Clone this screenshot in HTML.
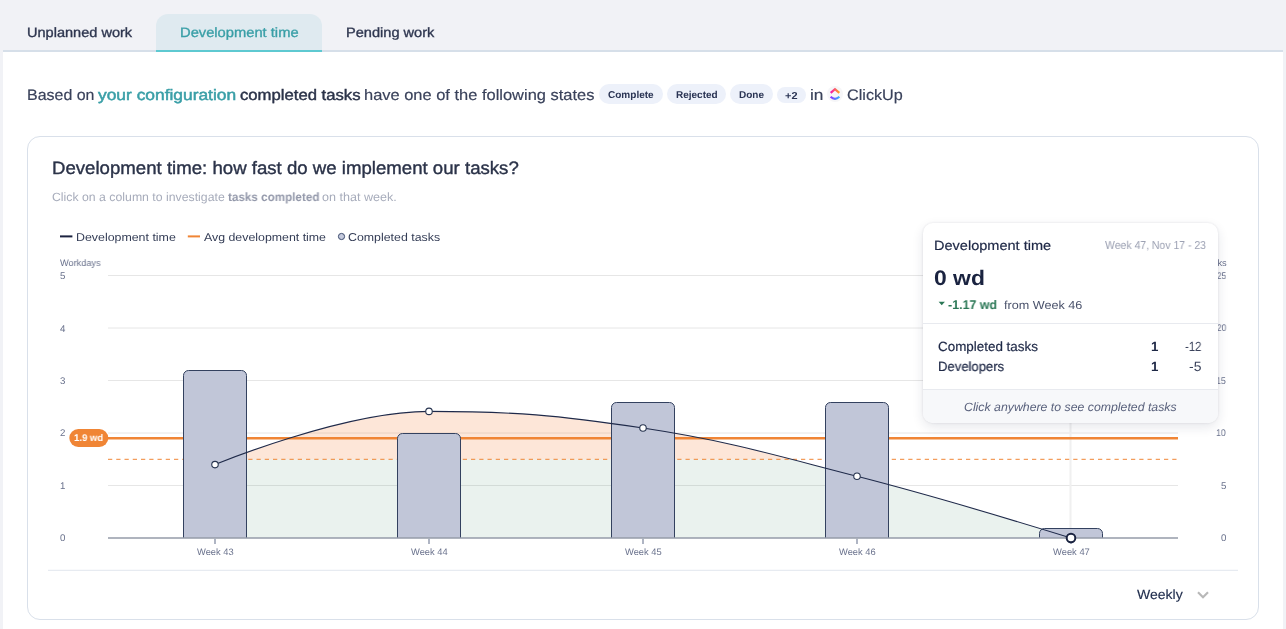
<!DOCTYPE html>
<html><head><meta charset="utf-8"><title>Development time</title>
<style>
*{box-sizing:border-box;margin:0;padding:0}
html,body{width:1286px;height:629px;overflow:hidden}
body{background:#f1f2f6;font-family:"Liberation Sans",sans-serif;position:relative}
.t{position:absolute;white-space:nowrap;line-height:1;text-rendering:geometricPrecision;transform-origin:0 0;will-change:transform}
#content{position:absolute;left:3px;top:52px;width:1280px;height:577px;background:#fff}
#tabline{position:absolute;left:3px;top:50px;width:1280px;height:2px;background:#d6dfe9}
#tabactive{position:absolute;left:156px;top:14px;width:166px;height:38px;background:#dfeaf0;border-radius:12px 12px 0 0;border-bottom:2px solid #5ec9d1}
#card{position:absolute;left:27px;top:136px;width:1232px;height:484px;border:1px solid #d9e0ea;border-radius:13px;background:#fff}
.chip{position:absolute;top:84px;height:20px;border-radius:10px;background:#edf1fa}
#chart{position:absolute;left:0;top:0}
#tip{position:absolute;left:923px;top:223px;width:295px;height:200px;background:#fff;border-radius:10px;box-shadow:0 4px 12px rgba(30,40,70,0.11),0 0 3px rgba(30,40,70,0.10);overflow:hidden}
#tip .sep{position:absolute;left:0;width:100%;height:1px;background:#e8eaef}
#tip .foot{position:absolute;left:0;top:166px;width:100%;height:34px;background:#f7f8fa}
#icon{position:absolute;left:827px;top:86px;width:16px;height:16px}
</style></head><body>
<div id="tabline"></div>
<div id="tabactive"></div>
<div id="content"></div>
<div class="chip" style="left:599px;width:64px"></div>
<div class="chip" style="left:667px;width:59px"></div>
<div class="chip" style="left:730px;width:43px"></div>
<div class="chip" style="left:777.3px;width:28.5px;top:87px;height:16px"></div>
<svg id="icon" viewBox="0 0 16 16"><defs><linearGradient id="g1" x1="0" x2="1" y1="0" y2="0"><stop offset="0" stop-color="#f513b4"/><stop offset="1" stop-color="#ffa61c"/></linearGradient><linearGradient id="g2" x1="0" x2="1" y1="0" y2="0"><stop offset="0" stop-color="#8b30ff"/><stop offset="1" stop-color="#33b4ff"/></linearGradient></defs><circle cx="8" cy="8" r="8" fill="#f6f6f8"/><path d="M3.7 6.9L8 3.1L12.3 6.9" fill="none" stroke="url(#g1)" stroke-width="2.2"/><path d="M3.6 10.7Q8 14.9 12.4 10.7" fill="none" stroke="url(#g2)" stroke-width="2.1"/></svg>
<div id="card"></div>
<svg id="chart" width="1286" height="629" viewBox="0 0 1286 629">
<defs><clipPath id="up"><rect x="100" y="260" width="1100" height="199.25"/></clipPath><clipPath id="dn"><rect x="100" y="459.25" width="1100" height="90"/></clipPath></defs>
<path d="M108 275.5H1178" stroke="#e6e6e6" stroke-width="1"/>
<path d="M108 328.0H1178" stroke="#e6e6e6" stroke-width="1"/>
<path d="M108 380.5H1178" stroke="#e6e6e6" stroke-width="1"/>
<path d="M108 433.0H1178" stroke="#e6e6e6" stroke-width="1"/>
<path d="M108 485.5H1178" stroke="#e6e6e6" stroke-width="1"/>
<path d="M1070.5 275V538" stroke="#f0f0f0" stroke-width="2"/>
<path d="M215.00 464.61 C215.00 464.61 343.40 411.42 429.00 411.42 C514.60 411.42 557.40 415.03 643.00 428.01 C728.60 440.99 771.40 454.31 857.00 476.31 C942.60 498.31 1071.00 538.00 1071.00 538.00 L1071 538 L215 538 Z" fill="rgba(244,132,60,0.2)" clip-path="url(#up)"/>
<path d="M215.00 464.61 C215.00 464.61 343.40 411.42 429.00 411.42 C514.60 411.42 557.40 415.03 643.00 428.01 C728.60 440.99 771.40 454.31 857.00 476.31 C942.60 498.31 1071.00 538.00 1071.00 538.00 L1071 538 L215 538 Z" fill="rgba(46,125,91,0.1)" clip-path="url(#dn)"/>
<path d="M108 438.2H1178" stroke="#f08535" stroke-width="2.4"/>
<path d="M108 459.3H1178" stroke="#f08535" stroke-width="1" stroke-dasharray="4.25 4"/>
<path d="M183.5 538V375.5a5.0 5.0 0 0 1 5.0 -5.0H241.5a5.0 5.0 0 0 1 5.0 5.0V538" fill="#c1c6d8" stroke="#33415f" stroke-width="1"/>
<path d="M397.5 538V438.5a5.0 5.0 0 0 1 5.0 -5.0H455.5a5.0 5.0 0 0 1 5.0 5.0V538" fill="#c1c6d8" stroke="#33415f" stroke-width="1"/>
<path d="M611.5 538V407.5a5.0 5.0 0 0 1 5.0 -5.0H669.5a5.0 5.0 0 0 1 5.0 5.0V538" fill="#c1c6d8" stroke="#33415f" stroke-width="1"/>
<path d="M825.5 538V407.5a5.0 5.0 0 0 1 5.0 -5.0H883.5a5.0 5.0 0 0 1 5.0 5.0V538" fill="#c1c6d8" stroke="#33415f" stroke-width="1"/>
<path d="M1039.5 538V533.5a5.0 5.0 0 0 1 5.0 -5.0H1097.5a5.0 5.0 0 0 1 5.0 5.0V538" fill="#c1c6d8" stroke="#33415f" stroke-width="1"/>
<path d="M108 538H1178" stroke="#949ba9" stroke-width="1.6"/>
<path d="M215 538.7V544" stroke="#9ba3b5" stroke-width="1.6"/>
<path d="M429 538.7V544" stroke="#9ba3b5" stroke-width="1.6"/>
<path d="M643 538.7V544" stroke="#9ba3b5" stroke-width="1.6"/>
<path d="M857 538.7V544" stroke="#9ba3b5" stroke-width="1.6"/>
<path d="M1071 538.7V544" stroke="#9ba3b5" stroke-width="1.6"/>
<path d="M215.00 464.61 C215.00 464.61 343.40 411.42 429.00 411.42 C514.60 411.42 557.40 415.03 643.00 428.01 C728.60 440.99 771.40 454.31 857.00 476.31 C942.60 498.31 1071.00 538.00 1071.00 538.00" fill="none" stroke="#1f2a4a" stroke-width="1.1"/>
<circle cx="215.0" cy="464.6" r="3.25" fill="#fff" stroke="#26334f" stroke-width="1.1"/>
<circle cx="429.0" cy="411.4" r="3.25" fill="#fff" stroke="#26334f" stroke-width="1.1"/>
<circle cx="643.0" cy="428.0" r="3.25" fill="#fff" stroke="#26334f" stroke-width="1.1"/>
<circle cx="857.0" cy="476.3" r="3.25" fill="#fff" stroke="#26334f" stroke-width="1.1"/>
<circle cx="1071" cy="538" r="4.3" fill="#fff" stroke="#1a2340" stroke-width="2"/>
<path d="M60 236.4H72.4" stroke="#1c2340" stroke-width="2"/>
<path d="M187.8 236.4H200" stroke="#f08535" stroke-width="2"/>
<circle cx="341.5" cy="236.5" r="3.1" fill="#c5cadd" stroke="#3a4a6d" stroke-width="1"/>
<rect x="69.3" y="429" width="39" height="18" rx="9" fill="#f08535"/>
<path d="M48 570.3H1238" stroke="#e1e6ee" stroke-width="1"/>
<path d="M1198 592.3L1203 597.2L1208 592.3" fill="none" stroke="#b8b8b8" stroke-width="2.2"/>
</svg>
<div class="t" id="tab1" style="left:26.60px;top:26px;font-size:13.6px;color:#2f3750;-webkit-text-stroke:0.35px #2f3750;transform:scaleX(1.0700)">Unplanned work</div>
<div class="t" id="tab2" style="left:179.53px;top:26px;font-size:13.6px;color:#3a9fa7;-webkit-text-stroke:0.35px #3a9fa7;transform:scaleX(1.0824)">Development time</div>
<div class="t" id="tab3" style="left:345.53px;top:26px;font-size:13.6px;color:#2f3750;-webkit-text-stroke:0.35px #2f3750;transform:scaleX(1.0730)">Pending work</div>
<div class="t" id="s1" style="left:27.00px;top:88px;font-size:15.2px;color:#3a425b;-webkit-text-stroke:0.18px #3a425b;transform:scaleX(1.0513)">Based on</div>
<div class="t" id="s2" style="left:98.46px;top:88px;font-size:15.2px;color:#3a9fa7;-webkit-text-stroke:0.5px #3a9fa7;transform:scaleX(1.1441)">your configuration</div>
<div class="t" id="s3" style="left:240.04px;top:88px;font-size:15.2px;color:#2b3349;-webkit-text-stroke:0.42px #2b3349;transform:scaleX(1.0978)">completed tasks</div>
<div class="t" id="s4" style="left:363.91px;top:88px;font-size:15.2px;color:#3a425b;-webkit-text-stroke:0.18px #3a425b;transform:scaleX(1.0827)">have one of the following states</div>
<div class="t" id="s5" style="left:810.00px;top:88px;font-size:15.2px;color:#3a425b;-webkit-text-stroke:0.18px #3a425b;transform:scaleX(1.1396)">in</div>
<div class="t" id="s6" style="left:847.09px;top:88px;font-size:15.2px;color:#3a425b;-webkit-text-stroke:0.18px #3a425b;transform:scaleX(1.0662)">ClickUp</div>
<div class="t" id="c1" style="left:608.13px;top:91px;font-size:10px;font-weight:bold;color:#2a3454;transform:scaleX(1.0020)">Complete</div>
<div class="t" id="c2" style="left:675.77px;top:91px;font-size:10px;font-weight:bold;color:#2a3454">Rejected</div>
<div class="t" id="c3" style="left:739.04px;top:91px;font-size:10px;font-weight:bold;color:#2a3454;transform:scaleX(0.9944)">Done</div>
<div class="t" id="c4" style="left:785.37px;top:92px;font-size:10px;font-weight:bold;color:#2a3454;transform:scaleX(1.0949)">+2</div>
<div class="t" id="h1" style="left:51.76px;top:159px;font-size:18px;color:#2b3349;-webkit-text-stroke:0.38px #2b3349;transform:scaleX(1.0345)">Development time: how fast do we implement our tasks?</div>
<div class="t" id="sub1" style="left:52.10px;top:191px;font-size:12px;color:#a7acbb;transform:scaleX(1.0237)">Click on a column to investigate</div>
<div class="t" id="sub2" style="left:228.29px;top:191px;font-size:12px;font-weight:bold;color:#9398aa;transform:scaleX(0.9725)">tasks completed</div>
<div class="t" id="sub3" style="left:322.44px;top:191px;font-size:12px;color:#a7acbb;transform:scaleX(1.0475)">on that week.</div>
<div class="t" id="l1" style="left:76.12px;top:233px;font-size:11.4px;color:#333c55;transform:scaleX(1.0868)">Development time</div>
<div class="t" id="l2" style="left:204.08px;top:233px;font-size:11.4px;color:#333c55;transform:scaleX(1.0842)">Avg development time</div>
<div class="t" id="l3" style="left:348.35px;top:233px;font-size:11.4px;color:#333c55;transform:scaleX(1.0854)">Completed tasks</div>
<div class="t" id="ax0" style="left:59.69px;top:259px;font-size:9.3px;color:#69718c;transform:scaleX(0.9874)">Workdays</div>
<div class="t" id="yl5" style="left:59.84px;top:272px;font-size:9.7px;color:#69718c">5</div>
<div class="t" id="yl4" style="left:59.87px;top:325px;font-size:9.7px;color:#69718c">4</div>
<div class="t" id="yl3" style="left:59.54px;top:377px;font-size:9.7px;color:#69718c">3</div>
<div class="t" id="yl2" style="left:59.87px;top:429px;font-size:9.7px;color:#69718c">2</div>
<div class="t" id="yl1" style="left:59.95px;top:482px;font-size:9.7px;color:#69718c">1</div>
<div class="t" id="yl0" style="left:59.81px;top:534px;font-size:9.7px;color:#69718c">0</div>
<div class="t" id="yr25" style="left:1217.07px;top:272px;font-size:9.7px;color:#69718c;transform:scaleX(0.8417)">25</div>
<div class="t" id="yr20" style="left:1217.05px;top:324px;font-size:9.7px;color:#69718c;transform:scaleX(0.8475)">20</div>
<div class="t" id="yr15" style="left:1216.06px;top:377px;font-size:9.7px;color:#69718c;transform:scaleX(0.8965)">15</div>
<div class="t" id="yr10" style="left:1216.45px;top:429px;font-size:9.7px;color:#69718c;transform:scaleX(0.8894)">10</div>
<div class="t" id="yr5" style="right:59.57px;top:482px;font-size:9.7px;color:#69718c">5</div>
<div class="t" id="yr0" style="right:59.64px;top:534px;font-size:9.7px;color:#69718c">0</div>
<div class="t" id="axr" style="right:59.60px;top:259px;font-size:9.3px;color:#69718c">Tasks</div>
<div class="t" id="xl43" style="left:196.64px;top:548px;font-size:9.3px;color:#69718c;transform:scaleX(1.0052)">Week 43</div>
<div class="t" id="xl44" style="left:410.64px;top:548px;font-size:9.3px;color:#69718c;transform:scaleX(1.0058)">Week 44</div>
<div class="t" id="xl45" style="left:624.64px;top:548px;font-size:9.3px;color:#69718c;transform:scaleX(1.0052)">Week 45</div>
<div class="t" id="xl46" style="left:838.73px;top:548px;font-size:9.3px;color:#69718c;transform:scaleX(1.0041)">Week 46</div>
<div class="t" id="xl47" style="left:1052.51px;top:548px;font-size:9.3px;color:#69718c;transform:scaleX(1.0078)">Week 47</div>
<div class="t" id="badge" style="left:74.23px;top:434px;font-size:9.8px;font-weight:bold;color:#fff;transform:scaleX(0.9740)">1.9 wd</div>
<div class="t" id="wk" style="left:1136.99px;top:588px;font-size:13.5px;color:#1f2c4c;-webkit-text-stroke:0.15px #1f2c4c;transform:scaleX(1.0397)">Weekly</div>
<div id="tip"><div class="sep" style="top:100px"></div><div class="foot"></div><div class="sep" style="top:165.5px"></div></div>
<svg style="position:absolute;left:938px;top:301px" width="8" height="5" viewBox="0 0 8 5"><path d="M0.6 0.8H6.9L3.75 4.2Z" fill="#2a7755"/></svg>
<div class="t" id="tt1" style="left:933.99px;top:239px;font-size:13.3px;color:#1e2846;-webkit-text-stroke:0.2px #1e2846;transform:scaleX(1.0931)">Development time</div>
<div class="t" id="tt2" style="left:1104.96px;top:241px;font-size:11.5px;color:#9ca1b3;transform:scaleX(0.9100)">Week 47, Nov 17 - 23</div>
<div class="t" id="tt3" style="left:934.31px;top:268px;font-size:21px;font-weight:bold;color:#1a2340;transform:scaleX(1.0911)">0 wd</div>
<div class="t" id="tt4" style="left:947.98px;top:299px;font-size:12.6px;font-weight:bold;color:#2a7755;transform:scaleX(0.9859)">-1.17 wd</div>
<div class="t" id="tt5" style="left:1004.09px;top:300px;font-size:11.6px;color:#4a526b;transform:scaleX(1.0876)">from Week 46</div>
<div class="t" id="tt6" style="left:938.08px;top:340px;font-size:13.3px;color:#1e2846;-webkit-text-stroke:0.2px #1e2846;transform:scaleX(1.0086)">Completed tasks</div>
<div class="t" id="tt7" style="left:938.09px;top:360px;font-size:13.3px;color:#1e2846;-webkit-text-stroke:0.2px #1e2846;transform:scaleX(0.9835)">Developers</div>
<div class="t" id="tt8" style="left:1150.51px;top:340px;font-size:13.3px;font-weight:bold;color:#1e2846">1</div>
<div class="t" id="tt9" style="left:1150.51px;top:360px;font-size:13.3px;font-weight:bold;color:#1e2846">1</div>
<div class="t" id="tt10" style="left:1185.40px;top:340px;font-size:13.3px;color:#3a425b;transform:scaleX(0.8562)">-12</div>
<div class="t" id="tt11" style="left:1189.49px;top:360px;font-size:13.3px;color:#3a425b;transform:scaleX(1.0475)">-5</div>
<div class="t" id="tt12" style="left:963.92px;top:401px;font-size:12px;font-style:italic;color:#59617c;transform:scaleX(1.0252)">Click anywhere to see completed tasks</div>
</body></html>
